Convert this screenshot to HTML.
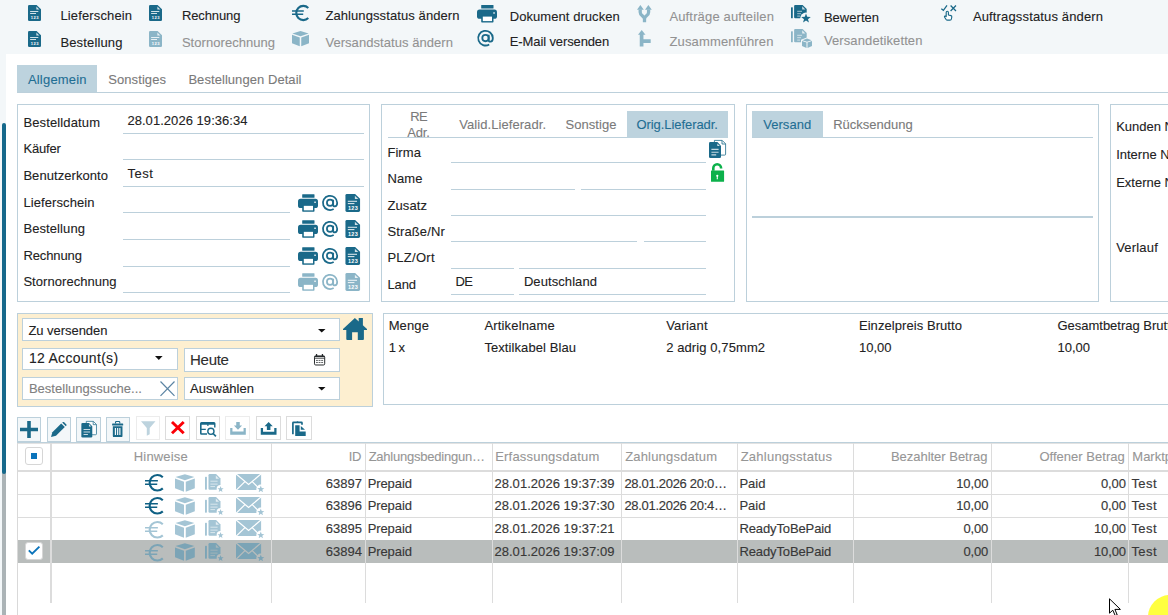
<!DOCTYPE html>
<html lang="de"><head><meta charset="utf-8"><title>Bestellungen</title>
<style>
html,body{margin:0;padding:0;}
body{width:1168px;height:615px;overflow:hidden;background:#fff;position:relative;font-family:"Liberation Sans",sans-serif;}
.t{position:absolute;white-space:nowrap;line-height:20px;height:20px;-webkit-text-stroke-width:0.1px;}
.b{position:absolute;box-sizing:border-box;}
svg{overflow:visible;}
</style></head><body>
<div class="b" style="left:0px;top:0px;width:1168px;height:54px;background:#f3f7f9;"></div>
<div class="b" style="left:0px;top:54px;width:6px;height:561px;background:#f3f7f9;"></div>
<div class="b" style="left:2.2px;top:470px;width:3.7px;height:145px;background:#abb3b6;"></div>
<div class="b" style="left:2px;top:123px;width:4px;height:351px;background:#15688b;border-radius:2px;"></div>
<svg class="b" style="left:28px;top:5px;" width="13" height="16" viewBox="0 0 13 16"><path d="M1.3 0H8.6L13 4.2V14.7Q13 16 11.7 16H1.3Q0 16 0 14.7V1.3Q0 0 1.3 0Z" fill="#1a6989"/><path d="M8.4 1.6V4.5H11.4Z" fill="#fff" opacity=".8"/><rect x="2.1" y="6" width="8.2" height="1" fill="#fff" opacity=".8"/><rect x="2.1" y="8" width="5.9" height="1" fill="#fff" opacity=".8"/><text x="2.7" y="13.8" font-family="Liberation Sans, sans-serif" font-weight="bold" font-size="4.1" fill="#fff" textLength="7.9" lengthAdjust="spacing">123</text></svg>
<span class="t" style="left:60.40px;top:6px;font-size:13px;color:#222;letter-spacing:0.138px;">Lieferschein</span>
<svg class="b" style="left:28px;top:31px;" width="13" height="16" viewBox="0 0 13 16"><path d="M1.3 0H8.6L13 4.2V14.7Q13 16 11.7 16H1.3Q0 16 0 14.7V1.3Q0 0 1.3 0Z" fill="#1a6989"/><path d="M8.4 1.6V4.5H11.4Z" fill="#fff" opacity=".8"/><rect x="2.1" y="6" width="8.2" height="1" fill="#fff" opacity=".8"/><rect x="2.1" y="8" width="5.9" height="1" fill="#fff" opacity=".8"/><text x="2.7" y="13.8" font-family="Liberation Sans, sans-serif" font-weight="bold" font-size="4.1" fill="#fff" textLength="7.9" lengthAdjust="spacing">123</text></svg>
<span class="t" style="left:60.40px;top:33px;font-size:13px;color:#222;letter-spacing:0.152px;">Bestellung</span>
<svg class="b" style="left:149px;top:5px;" width="13" height="16" viewBox="0 0 13 16"><path d="M1.3 0H8.6L13 4.2V14.7Q13 16 11.7 16H1.3Q0 16 0 14.7V1.3Q0 0 1.3 0Z" fill="#1a6989"/><path d="M8.4 1.6V4.5H11.4Z" fill="#fff" opacity=".8"/><rect x="2.1" y="6" width="8.2" height="1" fill="#fff" opacity=".8"/><rect x="2.1" y="8" width="5.9" height="1" fill="#fff" opacity=".8"/><text x="2.7" y="13.8" font-family="Liberation Sans, sans-serif" font-weight="bold" font-size="4.1" fill="#fff" textLength="7.9" lengthAdjust="spacing">123</text></svg>
<span class="t" style="left:181.90px;top:6px;font-size:13px;color:#222;letter-spacing:-0.102px;">Rechnung</span>
<svg class="b" style="left:149px;top:31px;" width="13" height="16" viewBox="0 0 13 16"><path d="M1.3 0H8.6L13 4.2V14.7Q13 16 11.7 16H1.3Q0 16 0 14.7V1.3Q0 0 1.3 0Z" fill="#8bb5c7"/><path d="M8.4 1.6V4.5H11.4Z" fill="#fff" opacity=".8"/><rect x="2.1" y="6" width="8.2" height="1" fill="#fff" opacity=".8"/><rect x="2.1" y="8" width="5.9" height="1" fill="#fff" opacity=".8"/><text x="2.7" y="13.8" font-family="Liberation Sans, sans-serif" font-weight="bold" font-size="4.1" fill="#fff" textLength="7.9" lengthAdjust="spacing">123</text></svg>
<span class="t" style="left:181.90px;top:33px;font-size:13px;color:#929292;letter-spacing:0.052px;">Stornorechnung</span>
<svg class="b" style="left:292px;top:5px;" width="17.4" height="16" viewBox="0 0 17.4 16"><path d="M16.3 2.9A7.1 7.1 0 1 0 16.3 13.1" fill="none" stroke="#1a6989" stroke-width="2.1"/><path d="M0 6.1H11.8M0 9.3H11.2" stroke="#1a6989" stroke-width="1.512" fill="none"/></svg>
<span class="t" style="left:325.40px;top:6px;font-size:13px;color:#222;letter-spacing:0.093px;">Zahlungsstatus ändern</span>
<svg class="b" style="left:292px;top:31px;" width="17" height="15.3" viewBox="0 0 18 16"><path d="M9 0L17.6 2.6L9 5.4L0.4 2.6Z" fill="#8bb5c7"/><path d="M0 4L8.2 6.8V16L0 12.8Z" fill="#8bb5c7"/><path d="M18 4L9.8 6.8V16L18 12.8Z" fill="#8bb5c7"/></svg>
<span class="t" style="left:325.40px;top:33px;font-size:13px;color:#929292;letter-spacing:0.055px;">Versandstatus ändern</span>
<svg class="b" style="left:477px;top:5.1px;" width="20" height="17.5" viewBox="0 0 20 17.5"><rect x="4.2" y="0" width="12.3" height="3.6" rx=".5" fill="#1a6989"/><rect x="0" y="4.6" width="20" height="9.2" rx="2.6" fill="#1a6989"/><rect x="4.2" y="10.7" width="12.3" height="6.8" rx=".7" fill="#1a6989"/><rect x="5.8" y="11.6" width="9.2" height="4.5" fill="#fff"/><rect x="16.3" y="7.2" width="1.5" height="1.5" rx=".4" fill="#fff"/></svg>
<span class="t" style="left:509.80px;top:7px;font-size:13px;color:#222;letter-spacing:0.055px;">Dokument drucken</span>
<svg class="b" style="left:477.2px;top:30px;" width="17" height="16.5" viewBox="0 0 16 16"><circle cx="8" cy="7.8" r="3.1" fill="none" stroke="#1a6989" stroke-width="1.75"/><path d="M11.1 4.6V9.6Q11.1 11.3 12.8 11.3Q15.1 11.3 15.1 7.8A7.1 7.1 0 1 0 11.6 14" fill="none" stroke="#1a6989" stroke-width="1.75"/></svg>
<span class="t" style="left:509.80px;top:32px;font-size:13px;color:#222;letter-spacing:-0.117px;">E-Mail versenden</span>
<svg class="b" style="left:637.2px;top:4.8px;" width="14.8" height="17.2" viewBox="0 0 14.8 17.2"><path d="M3.2 4.4V7.2C3.2 11 7.5 10.6 7.5 14V17.2M11.6 4.4V7.2C11.6 11 7.5 10.6 7.5 14" fill="none" stroke="#8bb5c7" stroke-width="3.3"/><path d="M0 4.7L3.4 0L6.8 4.7ZM8 4.7L11.4 0L14.8 4.7Z" fill="#8bb5c7"/></svg>
<span class="t" style="left:669.40px;top:7px;font-size:13px;color:#929292;letter-spacing:0.155px;">Aufträge aufteilen</span>
<svg class="b" style="left:637.5px;top:29.9px;" width="12.7" height="16.5" viewBox="0 0 12.7 16.5"><path d="M3.6 16.5V4M3.6 11.05H12.7" fill="none" stroke="#8bb5c7" stroke-width="3.7"/><path d="M0 4.8L3.7 0L7.5 4.8Z" fill="#8bb5c7"/></svg>
<span class="t" style="left:669.40px;top:32px;font-size:13px;color:#929292;letter-spacing:0.164px;">Zusammenführen</span>
<svg class="b" style="left:791px;top:5.1px;" width="20" height="18" viewBox="0 0 20 18"><rect x="0" y="2.3" width="1.8" height="11" rx=".5" fill="#1a6989"/><path d="M4.1 0H11.6L15.7 4.1V12.3Q15.7 13.3 14.7 13.3H4.1Q3.1 13.3 3.1 12.3V1Q3.1 0 4.1 0Z" fill="#1a6989"/><path d="M11.2 1.3V4.4H14.4Z" fill="#fff" opacity=".75"/><path d="M6.2 6.3H11M6.2 8.7H10M6.2 11.1H9" stroke="#fff" stroke-width="1" opacity=".6"/><circle cx="15" cy="13.3" r="5.7" fill="#f3f7f9"/><polygon points="15.00,8.50 16.23,11.80 19.76,11.95 17.00,14.15 17.94,17.55 15.00,15.60 12.06,17.55 13.00,14.15 10.24,11.95 13.77,11.80" fill="#1a6989"/></svg>
<span class="t" style="left:823.90px;top:8px;font-size:13px;color:#222;letter-spacing:0.037px;">Bewerten</span>
<svg class="b" style="left:791px;top:29.4px;" width="21.2" height="19" viewBox="0 0 21.2 19"><rect x="0" y="2.3" width="1.8" height="11" rx=".5" fill="#8bb5c7"/><path d="M4.1 0H11.6L15.7 4.1V12.3Q15.7 13.3 14.7 13.3H4.1Q3.1 13.3 3.1 12.3V1Q3.1 0 4.1 0Z" fill="#8bb5c7"/><path d="M11.2 1.3V4.4H14.4Z" fill="#fff" opacity=".75"/><path d="M6.2 6.3H11M6.2 8.7H10M6.2 11.1H9" stroke="#fff" stroke-width="1" opacity=".6"/><path d="M16 8.6L22 10.8V17.2L16 19.8L10 17.2V10.8Z" fill="#f3f7f9"/><path d="M16 9.6L20.6 11.2L16 12.8L11.4 11.2Z" fill="#8bb5c7"/><path d="M11 12L15.5 13.6V18.9L11 17Z" fill="#8bb5c7"/><path d="M21 12L16.5 13.6V18.9L21 17Z" fill="#8bb5c7"/></svg>
<span class="t" style="left:823.90px;top:31px;font-size:13px;color:#929292;letter-spacing:0.114px;">Versandetiketten</span>
<svg class="b" style="left:940.8px;top:5.1px;" width="15.4" height="15.6" viewBox="0 0 15.4 15.6"><path d="M0.3 3.8L2.4 5.3L6 0.4" fill="none" stroke="#1a6989" stroke-width="1.25"/><path d="M9.6 0.5L15 6M15 0.5L9.6 6" fill="none" stroke="#1a6989" stroke-width="1.25"/><path d="M5.2 11.6V7.4Q5.2 6.3 6.3 6.3Q7.4 6.3 7.4 7.4V10L10 10.6Q11 10.9 10.8 12L10.4 14Q10.2 15.1 9 15.1H6.4Q5.6 15.1 5 14.3L3.6 12.2Q3.2 11.4 4 11.1Q4.7 10.9 5.2 11.6Z" fill="#fff" stroke="#1a6989" stroke-width="1.15" stroke-linejoin="round"/></svg>
<span class="t" style="left:972.90px;top:7px;font-size:13px;color:#222;letter-spacing:0.147px;">Auftragsstatus ändern</span>
<div class="b" style="left:17px;top:65px;width:80px;height:27px;background:#bdd3de;"></div>
<div class="b" style="left:17px;top:92px;width:1151px;height:1px;background:#bcd0db;"></div>
<span class="t" style="left:27.90px;top:70px;font-size:13px;color:#1f6e93;letter-spacing:0.203px;">Allgemein</span>
<span class="t" style="left:108.20px;top:70px;font-size:13px;color:#7a7a7a;letter-spacing:0.090px;">Sonstiges</span>
<span class="t" style="left:188.40px;top:70px;font-size:13px;color:#7a7a7a;letter-spacing:0.060px;">Bestellungen Detail</span>
<div class="b" style="left:17px;top:104px;width:353px;height:198px;border:1px solid #bcd0db;"></div>
<div class="b" style="left:123px;top:133px;width:241px;height:1px;background:#bcd0db;"></div>
<div class="b" style="left:123px;top:159px;width:241px;height:1px;background:#bcd0db;"></div>
<div class="b" style="left:123px;top:186px;width:241px;height:1px;background:#bcd0db;"></div>
<div class="b" style="left:123px;top:212px;width:167px;height:1px;background:#bcd0db;"></div>
<div class="b" style="left:123px;top:239px;width:167px;height:1px;background:#bcd0db;"></div>
<div class="b" style="left:123px;top:266px;width:167px;height:1px;background:#bcd0db;"></div>
<div class="b" style="left:123px;top:292px;width:167px;height:1px;background:#bcd0db;"></div>
<span class="t" style="left:23.40px;top:113px;font-size:13px;color:#222;letter-spacing:0.131px;">Bestelldatum</span>
<span class="t" style="left:127.40px;top:111px;font-size:13px;color:#222;letter-spacing:0.048px;">28.01.2026 19:36:34</span>
<span class="t" style="left:23.40px;top:139px;font-size:13px;color:#222;letter-spacing:-0.158px;">Käufer</span>
<span class="t" style="left:23.40px;top:166px;font-size:13px;color:#222;letter-spacing:0.059px;">Benutzerkonto</span>
<span class="t" style="left:127.40px;top:164px;font-size:13px;color:#222;letter-spacing:0.544px;">Test</span>
<span class="t" style="left:23.40px;top:193px;font-size:13px;color:#222;letter-spacing:0.093px;">Lieferschein</span>
<span class="t" style="left:23.40px;top:219px;font-size:13px;color:#222;letter-spacing:0.096px;">Bestellung</span>
<span class="t" style="left:23.40px;top:246px;font-size:13px;color:#222;letter-spacing:-0.102px;">Rechnung</span>
<span class="t" style="left:23.40px;top:272px;font-size:13px;color:#222;letter-spacing:0.052px;">Stornorechnung</span>
<svg class="b" style="left:298.2px;top:193.9px;" width="20" height="18" viewBox="0 0 20 17.5"><rect x="4.2" y="0" width="12.3" height="3.6" rx=".5" fill="#1a6989"/><rect x="0" y="4.6" width="20" height="9.2" rx="2.6" fill="#1a6989"/><rect x="4.2" y="10.7" width="12.3" height="6.8" rx=".7" fill="#1a6989"/><rect x="5.8" y="11.6" width="9.2" height="4.5" fill="#fff"/><rect x="16.3" y="7.2" width="1.5" height="1.5" rx=".4" fill="#fff"/></svg>
<svg class="b" style="left:322px;top:194.8px;" width="16.1" height="16.1" viewBox="0 0 16 16"><circle cx="8" cy="7.8" r="3.1" fill="none" stroke="#1a6989" stroke-width="1.75"/><path d="M11.1 4.6V9.6Q11.1 11.3 12.8 11.3Q15.1 11.3 15.1 7.8A7.1 7.1 0 1 0 11.6 14" fill="none" stroke="#1a6989" stroke-width="1.75"/></svg>
<svg class="b" style="left:345.2px;top:194px;" width="15.5" height="18" viewBox="0 0 13 16"><path d="M1.3 0H8.6L13 4.2V14.7Q13 16 11.7 16H1.3Q0 16 0 14.7V1.3Q0 0 1.3 0Z" fill="#1a6989"/><path d="M8.4 1.6V4.5H11.4Z" fill="#fff" opacity=".8"/><rect x="2.1" y="6" width="8.2" height="1" fill="#fff" opacity=".8"/><rect x="2.1" y="8" width="5.9" height="1" fill="#fff" opacity=".8"/><text x="2.3" y="14.1" font-family="Liberation Sans, sans-serif" font-weight="bold" font-size="4.9" fill="#fff" textLength="8.6" lengthAdjust="spacing">123</text></svg>
<svg class="b" style="left:298.2px;top:219.9px;" width="20" height="18" viewBox="0 0 20 17.5"><rect x="4.2" y="0" width="12.3" height="3.6" rx=".5" fill="#1a6989"/><rect x="0" y="4.6" width="20" height="9.2" rx="2.6" fill="#1a6989"/><rect x="4.2" y="10.7" width="12.3" height="6.8" rx=".7" fill="#1a6989"/><rect x="5.8" y="11.6" width="9.2" height="4.5" fill="#fff"/><rect x="16.3" y="7.2" width="1.5" height="1.5" rx=".4" fill="#fff"/></svg>
<svg class="b" style="left:322px;top:220.8px;" width="16.1" height="16.1" viewBox="0 0 16 16"><circle cx="8" cy="7.8" r="3.1" fill="none" stroke="#1a6989" stroke-width="1.75"/><path d="M11.1 4.6V9.6Q11.1 11.3 12.8 11.3Q15.1 11.3 15.1 7.8A7.1 7.1 0 1 0 11.6 14" fill="none" stroke="#1a6989" stroke-width="1.75"/></svg>
<svg class="b" style="left:345.2px;top:220px;" width="15.5" height="18" viewBox="0 0 13 16"><path d="M1.3 0H8.6L13 4.2V14.7Q13 16 11.7 16H1.3Q0 16 0 14.7V1.3Q0 0 1.3 0Z" fill="#1a6989"/><path d="M8.4 1.6V4.5H11.4Z" fill="#fff" opacity=".8"/><rect x="2.1" y="6" width="8.2" height="1" fill="#fff" opacity=".8"/><rect x="2.1" y="8" width="5.9" height="1" fill="#fff" opacity=".8"/><text x="2.3" y="14.1" font-family="Liberation Sans, sans-serif" font-weight="bold" font-size="4.9" fill="#fff" textLength="8.6" lengthAdjust="spacing">123</text></svg>
<svg class="b" style="left:298.2px;top:246.9px;" width="20" height="18" viewBox="0 0 20 17.5"><rect x="4.2" y="0" width="12.3" height="3.6" rx=".5" fill="#1a6989"/><rect x="0" y="4.6" width="20" height="9.2" rx="2.6" fill="#1a6989"/><rect x="4.2" y="10.7" width="12.3" height="6.8" rx=".7" fill="#1a6989"/><rect x="5.8" y="11.6" width="9.2" height="4.5" fill="#fff"/><rect x="16.3" y="7.2" width="1.5" height="1.5" rx=".4" fill="#fff"/></svg>
<svg class="b" style="left:322px;top:247.8px;" width="16.1" height="16.1" viewBox="0 0 16 16"><circle cx="8" cy="7.8" r="3.1" fill="none" stroke="#1a6989" stroke-width="1.75"/><path d="M11.1 4.6V9.6Q11.1 11.3 12.8 11.3Q15.1 11.3 15.1 7.8A7.1 7.1 0 1 0 11.6 14" fill="none" stroke="#1a6989" stroke-width="1.75"/></svg>
<svg class="b" style="left:345.2px;top:247px;" width="15.5" height="18" viewBox="0 0 13 16"><path d="M1.3 0H8.6L13 4.2V14.7Q13 16 11.7 16H1.3Q0 16 0 14.7V1.3Q0 0 1.3 0Z" fill="#1a6989"/><path d="M8.4 1.6V4.5H11.4Z" fill="#fff" opacity=".8"/><rect x="2.1" y="6" width="8.2" height="1" fill="#fff" opacity=".8"/><rect x="2.1" y="8" width="5.9" height="1" fill="#fff" opacity=".8"/><text x="2.3" y="14.1" font-family="Liberation Sans, sans-serif" font-weight="bold" font-size="4.9" fill="#fff" textLength="8.6" lengthAdjust="spacing">123</text></svg>
<svg class="b" style="left:298.2px;top:272.9px;" width="20" height="18" viewBox="0 0 20 17.5"><rect x="4.2" y="0" width="12.3" height="3.6" rx=".5" fill="#8bb5c7"/><rect x="0" y="4.6" width="20" height="9.2" rx="2.6" fill="#8bb5c7"/><rect x="4.2" y="10.7" width="12.3" height="6.8" rx=".7" fill="#8bb5c7"/><rect x="5.8" y="11.6" width="9.2" height="4.5" fill="#fff"/><rect x="16.3" y="7.2" width="1.5" height="1.5" rx=".4" fill="#fff"/></svg>
<svg class="b" style="left:322px;top:273.8px;" width="16.1" height="16.1" viewBox="0 0 16 16"><circle cx="8" cy="7.8" r="3.1" fill="none" stroke="#8bb5c7" stroke-width="1.75"/><path d="M11.1 4.6V9.6Q11.1 11.3 12.8 11.3Q15.1 11.3 15.1 7.8A7.1 7.1 0 1 0 11.6 14" fill="none" stroke="#8bb5c7" stroke-width="1.75"/></svg>
<svg class="b" style="left:345.2px;top:273px;" width="15.5" height="18" viewBox="0 0 13 16"><path d="M1.3 0H8.6L13 4.2V14.7Q13 16 11.7 16H1.3Q0 16 0 14.7V1.3Q0 0 1.3 0Z" fill="#8bb5c7"/><path d="M8.4 1.6V4.5H11.4Z" fill="#fff" opacity=".8"/><rect x="2.1" y="6" width="8.2" height="1" fill="#fff" opacity=".8"/><rect x="2.1" y="8" width="5.9" height="1" fill="#fff" opacity=".8"/><text x="2.3" y="14.1" font-family="Liberation Sans, sans-serif" font-weight="bold" font-size="4.9" fill="#fff" textLength="8.6" lengthAdjust="spacing">123</text></svg>
<div class="b" style="left:381px;top:104px;width:354px;height:198px;border:1px solid #bcd0db;"></div>
<div class="b" style="left:388px;top:137px;width:340px;height:1px;background:#bcd0db;"></div>
<div class="b" style="left:627px;top:111px;width:101px;height:27px;background:#bdd3de;"></div>
<span class="t" style="left:410.14px;top:107px;font-size:13px;color:#7a7a7a;letter-spacing:-0.450px;">RE</span>
<span class="t" style="left:407.15px;top:123px;font-size:13px;color:#7a7a7a;letter-spacing:-0.102px;clip-path:inset(0 0 3.5px 0);">Adr.</span>
<span class="t" style="left:459.15px;top:115px;font-size:13px;color:#7a7a7a;letter-spacing:0.075px;">Valid.Lieferadr.</span>
<span class="t" style="left:565.40px;top:115px;font-size:13px;color:#7a7a7a;letter-spacing:0.075px;">Sonstige</span>
<span class="t" style="left:636.40px;top:115px;font-size:13px;color:#1f6e93;letter-spacing:-0.062px;">Orig.Lieferadr.</span>
<span class="t" style="left:387.40px;top:143px;font-size:13px;color:#222;letter-spacing:0.072px;">Firma</span>
<span class="t" style="left:387.40px;top:169px;font-size:13px;color:#222;letter-spacing:0.122px;">Name</span>
<span class="t" style="left:387.40px;top:196px;font-size:13px;color:#222;letter-spacing:0.120px;">Zusatz</span>
<span class="t" style="left:387.40px;top:222px;font-size:13px;color:#222;letter-spacing:0.136px;">Straße/Nr</span>
<span class="t" style="left:387.40px;top:248px;font-size:13px;color:#222;letter-spacing:0.267px;">PLZ/Ort</span>
<span class="t" style="left:387.40px;top:275px;font-size:13px;color:#222;letter-spacing:-0.081px;">Land</span>
<span class="t" style="left:455.39px;top:272px;font-size:13px;color:#222;letter-spacing:-0.450px;">DE</span>
<span class="t" style="left:523.90px;top:272px;font-size:13px;color:#222;letter-spacing:0.079px;">Deutschland</span>
<div class="b" style="left:451px;top:162px;width:255px;height:1px;background:#bcd0db;"></div>
<div class="b" style="left:451px;top:189px;width:124px;height:1px;background:#bcd0db;"></div>
<div class="b" style="left:581px;top:189px;width:125px;height:1px;background:#bcd0db;"></div>
<div class="b" style="left:451px;top:215px;width:255px;height:1px;background:#bcd0db;"></div>
<div class="b" style="left:451px;top:241px;width:186px;height:1px;background:#bcd0db;"></div>
<div class="b" style="left:644px;top:241px;width:62px;height:1px;background:#bcd0db;"></div>
<div class="b" style="left:451px;top:268px;width:63px;height:1px;background:#bcd0db;"></div>
<div class="b" style="left:519px;top:268px;width:187px;height:1px;background:#bcd0db;"></div>
<div class="b" style="left:451px;top:294px;width:63px;height:1px;background:#bcd0db;"></div>
<div class="b" style="left:519px;top:294px;width:187px;height:1px;background:#bcd0db;"></div>
<svg class="b" style="left:709px;top:140px;" width="17" height="18" viewBox="0 0 17 18"><path d="M5.4 0.4H13.2L16.6 3.8V14.2Q16.6 15.1 15.7 15.1H5.4Z" fill="#fff" stroke="#1a6989" stroke-width=".8"/><path d="M13 0.6V4H16.4" fill="none" stroke="#1a6989" stroke-width=".8"/><path d="M1.3 2.1H8.4L12 5.7V16.7Q12 18 10.7 18H1.3Q0 18 0 16.7V3.4Q0 2.1 1.3 2.1Z" fill="#1a6989"/><path d="M8.3 3.4V6H10.9Z" fill="#fff" opacity=".8"/><path d="M2.4 9.4H9.6M2.4 12.2H9.6M2.4 14.9H7.2" stroke="#fff" stroke-width="1.1" opacity=".75"/></svg>
<svg class="b" style="left:711px;top:163.2px;" width="13.2" height="18.7" viewBox="0 0 13.2 18.7"><path d="M2.3 7.8V5.2A3.9 3.9 0 0 1 10.1 5.2V5.5" fill="none" stroke="#0cb14b" stroke-width="2.6"/><rect x="0" y="7.4" width="13.1" height="11.3" rx=".5" fill="#0cb14b"/><circle cx="6.3" cy="12.8" r="1.1" fill="#fff"/><path d="M5.9 12.8H6.7L6.9 16.3H5.7Z" fill="#fff"/></svg>
<div class="b" style="left:746px;top:104px;width:353px;height:198px;border:1px solid #bcd0db;"></div>
<div class="b" style="left:752px;top:111px;width:71px;height:27px;background:#bdd3de;"></div>
<div class="b" style="left:752px;top:137px;width:341px;height:1px;background:#bcd0db;"></div>
<span class="t" style="left:763.15px;top:115px;font-size:13px;color:#1f6e93;letter-spacing:0.061px;">Versand</span>
<span class="t" style="left:833.15px;top:115px;font-size:13px;color:#7a7a7a;letter-spacing:0.018px;">Rücksendung</span>
<div class="b" style="left:752px;top:216px;width:341px;height:2px;background:#bcd0db;"></div>
<div class="b" style="left:1110px;top:104px;width:80px;height:198px;border:1px solid #bcd0db;"></div>
<span class="t" style="left:1116.15px;top:117px;font-size:13px;color:#222;letter-spacing:0.000px;">Kunden Nr</span>
<span class="t" style="left:1116.15px;top:145px;font-size:13px;color:#222;letter-spacing:0.000px;">Interne Nr</span>
<span class="t" style="left:1116.15px;top:173px;font-size:13px;color:#222;letter-spacing:0.000px;">Externe Nr</span>
<span class="t" style="left:1116.15px;top:238px;font-size:13px;color:#222;letter-spacing:0.196px;">Verlauf</span>
<div class="b" style="left:17px;top:313px;width:356px;height:94px;background:#fdefd0;border:1px solid #bcd0db;"></div>
<div class="b" style="left:22px;top:318px;width:318px;height:23px;background:#fff;border:1px solid #bcd0db;"></div>
<span class="t" style="left:28.40px;top:321px;font-size:13px;color:#222;letter-spacing:-0.038px;">Zu versenden</span>
<svg class="b" style="left:317.5px;top:328.5px;" width="7.5" height="3.6" viewBox="0 0 7.5 3.6"><path d="M0 0H7.5L3.75 3.6Z" fill="#111"/></svg>
<svg class="b" style="left:343px;top:318px;" width="24" height="22" viewBox="0 0 24 22"><path d="M11.9 0L0 11V11.9H3.3V21Q3.3 21.9 4.2 21.9H9.1V14.2H14.8V21.9H20Q20.9 21.9 20.9 21V11.9H24V11L19.9 7.2V0H15.7V3.4Z" fill="#1a6989"/></svg>
<div class="b" style="left:22px;top:348px;width:156px;height:22px;background:#fff;border:1px solid #bcd0db;"></div>
<span class="t" style="left:28.90px;top:348px;font-size:14px;color:#222;letter-spacing:0.297px;">12 Account(s)</span>
<svg class="b" style="left:155px;top:356px;" width="7.6" height="4" viewBox="0 0 7.6 4"><path d="M0 0H7.6L3.8 4Z" fill="#111"/></svg>
<div class="b" style="left:184px;top:348px;width:156px;height:24px;background:#fff;border:1px solid #bcd0db;"></div>
<span class="t" style="left:190.00px;top:350px;font-size:15px;color:#2e2e2e;letter-spacing:-0.270px;">Heute</span>
<svg class="b" style="left:314px;top:354.1px;" width="11.2" height="11.5" viewBox="0 0 11.2 11.5"><rect x="0.5" y="2" width="10.2" height="9" rx="1.2" fill="#fff" stroke="#262a2c" stroke-width="1"/><rect x="0.5" y="1.8" width="10.2" height="1.3" fill="#262a2c"/><rect x="1.9" y="0" width="1.3" height="2.2" fill="#262a2c"/><rect x="7.8" y="0" width="1.3" height="2.2" fill="#262a2c"/><rect x="0.5" y="3.8" width="10.2" height=".8" fill="#262a2c"/><path d="M2 6.45H3.9M4.6 6.45H6.5M7.2 6.45H9.1M2 8.5H3.9M4.6 8.5H6.5M7.2 8.5H9.1" stroke="#262a2c" stroke-width=".85" opacity=".85"/></svg>
<div class="b" style="left:22px;top:377px;width:156px;height:23px;background:#fff;border:1px solid #bcd0db;"></div>
<span class="t" style="left:28.90px;top:379px;font-size:13px;color:#808080;letter-spacing:0.020px;">Bestellungssuche...</span>
<svg class="b" style="left:159.8px;top:381px;" width="15" height="15.4" viewBox="0 0 15 15.4"><path d="M0.5 0.5L14.5 14.9M14.5 0.5L0.5 14.9" stroke="#5b84a3" stroke-width="1.2" fill="none"/></svg>
<div class="b" style="left:184px;top:377px;width:156px;height:23px;background:#fff;border:1px solid #bcd0db;"></div>
<span class="t" style="left:190.00px;top:379px;font-size:13px;color:#222;letter-spacing:0.053px;">Auswählen</span>
<svg class="b" style="left:317.5px;top:386.8px;" width="7.5" height="3.6" viewBox="0 0 7.5 3.6"><path d="M0 0H7.5L3.75 3.6Z" fill="#111"/></svg>
<div class="b" style="left:383px;top:313px;width:800px;height:92px;border:1px solid #bcd0db;"></div>
<span class="t" style="left:388.65px;top:316px;font-size:13px;color:#222;letter-spacing:0.134px;">Menge</span>
<span class="t" style="left:484.40px;top:316px;font-size:13px;color:#222;letter-spacing:0.169px;">Artikelname</span>
<span class="t" style="left:666.15px;top:316px;font-size:13px;color:#222;letter-spacing:0.189px;">Variant</span>
<span class="t" style="left:858.90px;top:316px;font-size:13px;color:#222;letter-spacing:0.067px;">Einzelpreis Brutto</span>
<span class="t" style="left:1057.40px;top:316px;font-size:13px;color:#222;letter-spacing:-0.003px;">Gesamtbetrag Brutto</span>
<span class="t" style="left:388.64px;top:338px;font-size:13px;color:#222;letter-spacing:-0.450px;">1 x</span>
<span class="t" style="left:484.40px;top:338px;font-size:13px;color:#222;letter-spacing:0.081px;">Textilkabel Blau</span>
<span class="t" style="left:666.15px;top:338px;font-size:13px;color:#222;letter-spacing:0.096px;">2 adrig 0,75mm2</span>
<span class="t" style="left:858.90px;top:338px;font-size:13px;color:#222;letter-spacing:0.025px;">10,00</span>
<span class="t" style="left:1057.40px;top:338px;font-size:13px;color:#222;letter-spacing:0.025px;">10,00</span>
<div class="b" style="left:17px;top:417px;width:24px;height:25px;background:#f3f7f9;border:1px solid #bcd0db;"></div>
<div class="b" style="left:47px;top:417px;width:24px;height:25px;background:#f3f7f9;border:1px solid #bcd0db;"></div>
<div class="b" style="left:76px;top:417px;width:25px;height:25px;background:#f3f7f9;border:1px solid #bcd0db;"></div>
<div class="b" style="left:106px;top:417px;width:24px;height:25px;background:#f3f7f9;border:1px solid #bcd0db;"></div>
<div class="b" style="left:136px;top:416px;width:24px;height:24px;background:#fff;border:1px solid #ececec;"></div>
<div class="b" style="left:165px;top:416px;width:25px;height:24px;background:#fff;border:1px solid #dcdcdc;"></div>
<div class="b" style="left:196px;top:416px;width:24px;height:24px;background:#fff;border:1px solid #dcdcdc;"></div>
<div class="b" style="left:225px;top:416px;width:25px;height:24px;background:#fff;border:1px solid #ececec;"></div>
<div class="b" style="left:256px;top:416px;width:25px;height:24px;background:#fff;border:1px solid #dcdcdc;"></div>
<div class="b" style="left:286px;top:416px;width:26px;height:24px;background:#fff;border:1px solid #dcdcdc;"></div>
<svg class="b" style="left:20px;top:421px;" width="18" height="17" viewBox="0 0 18 17"><path d="M9 0V17M0 8.5H18" stroke="#1a6989" stroke-width="3.6" fill="none"/></svg>
<svg class="b" style="left:51px;top:422px;" width="16" height="15" viewBox="0 0 16 15"><path d="M0 15L1.4 10.2L10.2 1.4L13.8 5L5 13.8Z" fill="#1a6989"/><path d="M11.2 0.6L12 0Q12.6 -.3 13.2 .2L15.4 2.4Q15.8 3 15.4 3.6L14.8 4.2Z" fill="#1a6989"/></svg>
<svg class="b" style="left:80.7px;top:420.8px;" width="16.2" height="16.4" viewBox="0 0 17 18"><path d="M5.4 0.4H13.2L16.6 3.8V14.2Q16.6 15.1 15.7 15.1H5.4Z" fill="#fbfcfd" stroke="#1a6989" stroke-width=".8"/><path d="M13 0.6V4H16.4" fill="none" stroke="#1a6989" stroke-width=".8"/><path d="M1.3 2.1H8.4L12 5.7V16.7Q12 18 10.7 18H1.3Q0 18 0 16.7V3.4Q0 2.1 1.3 2.1Z" fill="#1a6989"/><path d="M8.3 3.4V6H10.9Z" fill="#fff" opacity=".8"/><path d="M2.4 9.4H9.6M2.4 12.2H9.6M2.4 14.9H7.2" stroke="#fff" stroke-width="1.1" opacity=".75"/></svg>
<svg class="b" style="left:112px;top:420.9px;" width="11.3" height="16.1" viewBox="0 0 11 16"><path d="M3.4 2.4V1.2Q3.4 .5 4.1 .5H6.9Q7.6 .5 7.6 1.2V2.4" fill="none" stroke="#1a6989" stroke-width="1.1"/><rect x="0" y="2.4" width="11" height="2" rx=".5" fill="#1a6989"/><path d="M0.7 5.2H10.3V14.8Q10.3 16 9.1 16H1.9Q.7 16 .7 14.8Z M2.7 7V14H3.9V7Z M4.9 7V14H6.1V7Z M7.1 7V14H8.3V7Z" fill="#1a6989" fill-rule="evenodd"/></svg>
<svg class="b" style="left:140.8px;top:421px;" width="14.5" height="15" viewBox="0 0 15 15"><path d="M0 0H15L9 7V13.4L6 15V7Z" fill="#bdd3de"/></svg>
<svg class="b" style="left:171px;top:421.4px;" width="13.7" height="13.3" viewBox="0 0 14 13.5"><path d="M1 1L13 12.5M13 1L1 12.5" stroke="#fb0007" stroke-width="3" fill="none"/></svg>
<svg class="b" style="left:200.2px;top:422px;" width="16.2" height="14.6" viewBox="0 0 16.2 14.6"><path d="M1.5 0H14Q15.5 0 15.5 1.5V5.4H14.1V2.7H8.5V4H7.3V2.7H1.6V6.8H5.8V8H1.6V11.3H7V12.7H1.5Q0 12.7 0 11.2V1.5Q0 0 1.5 0Z" fill="#1a6989"/><circle cx="10.9" cy="9.3" r="3.1" fill="none" stroke="#1a6989" stroke-width="1.4"/><path d="M13.1 11.5L15.9 14.3" stroke="#1a6989" stroke-width="1.7"/></svg>
<svg class="b" style="left:230px;top:422px;" width="16" height="12.7" viewBox="0 0 16 13"><path d="M0 6.2H2.3V9.8H13.7V6.2H16V13H0Z" fill="#8bb5c7"/><path d="M6.2 0H9.8V3.6H12.2L8 8L3.8 3.6H6.2Z" fill="#8bb5c7"/></svg>
<svg class="b" style="left:259.9px;top:422px;" width="17.3" height="12.8" viewBox="0 0 16 13"><path d="M0 6.2H2.3V9.8H13.7V6.2H16V13H0Z" fill="#1a6989"/><path d="M8 0L12.2 4.4H9.8V8H6.2V4.4H3.8Z" fill="#1a6989"/></svg>
<svg class="b" style="left:292px;top:420.8px;" width="14" height="15" viewBox="0 0 14 15"><path d="M0.9 13.2V2Q0.9 1.4 1.5 1.4H9.4Q10 1.4 10 2V3.8" fill="none" stroke="#1a6989" stroke-width="1.7"/><path d="M4.3 .8L5.5 0L6.7 .8Z" fill="#1a6989"/><path d="M3.2 4.2H7.6V10.5H13.7V14.9H3.2Z" fill="#1a6989"/><path d="M8.8 4.9V8.8H13Z" fill="#1a6989"/></svg>
<div class="b" style="left:17px;top:442px;width:1151px;height:1px;background:#bcd0db;"></div>
<div class="b" style="left:18px;top:443px;width:1150px;height:1px;background:#e2e2e2;"></div>
<div class="b" style="left:17px;top:443px;width:1px;height:172px;background:#d9d9d9;"></div>
<div class="b" style="left:18px;top:540px;width:1150px;height:23px;background:#b9bdbc;"></div>
<div class="b" style="left:18px;top:470px;width:1150px;height:2px;background:#dcdcdc;"></div>
<div class="b" style="left:18px;top:494px;width:1150px;height:1px;background:#dcdcdc;"></div>
<div class="b" style="left:18px;top:517px;width:1150px;height:1px;background:#dcdcdc;"></div>
<div class="b" style="left:50px;top:443px;width:2px;height:160px;background:#dcdcdc;"></div>
<div class="b" style="left:271px;top:443px;width:1px;height:160px;background:#dcdcdc;"></div>
<div class="b" style="left:365px;top:443px;width:1px;height:160px;background:#dcdcdc;"></div>
<div class="b" style="left:492px;top:443px;width:1px;height:160px;background:#dcdcdc;"></div>
<div class="b" style="left:621px;top:443px;width:1px;height:160px;background:#dcdcdc;"></div>
<div class="b" style="left:737px;top:443px;width:1px;height:160px;background:#dcdcdc;"></div>
<div class="b" style="left:853px;top:443px;width:1px;height:160px;background:#dcdcdc;"></div>
<div class="b" style="left:991px;top:443px;width:1px;height:160px;background:#dcdcdc;"></div>
<div class="b" style="left:1128px;top:443px;width:1px;height:160px;background:#dcdcdc;"></div>
<span class="t" style="left:133.80px;top:447px;font-size:13px;color:#969696;letter-spacing:0.170px;">Hinweise</span>
<span class="t" style="left:348.80px;top:447px;font-size:13px;color:#969696;letter-spacing:-0.450px;">ID</span>
<span class="t" style="left:368.65px;top:447px;font-size:13px;color:#969696;letter-spacing:-0.231px;">Zahlungsbedingun…</span>
<span class="t" style="left:495.15px;top:447px;font-size:13px;color:#969696;letter-spacing:0.210px;">Erfassungsdatum</span>
<span class="t" style="left:625.15px;top:447px;font-size:13px;color:#969696;letter-spacing:0.189px;">Zahlungsdatum</span>
<span class="t" style="left:740.65px;top:447px;font-size:13px;color:#969696;letter-spacing:0.246px;">Zahlungsstatus</span>
<span class="t" style="left:890.90px;top:447px;font-size:13px;color:#969696;letter-spacing:-0.019px;">Bezahlter Betrag</span>
<span class="t" style="left:1039.40px;top:447px;font-size:13px;color:#969696;letter-spacing:0.022px;">Offener Betrag</span>
<span class="t" style="left:1132.30px;top:447px;font-size:13px;color:#969696;letter-spacing:0.000px;">Marktplatz</span>
<div class="b" style="left:25.2px;top:447.2px;width:17.5px;height:17.5px;background:#fff;border:1px solid #d6d6d6;border-radius:3px;"></div>
<div class="b" style="left:31px;top:453px;width:6px;height:6px;background:#0b74bb;"></div>
<div class="b" style="left:25.2px;top:542.2px;width:17.5px;height:17.5px;background:#fff;border:1px solid #d6d6d6;border-radius:3px;"></div>
<svg class="b" style="left:28px;top:545px;" width="12" height="12" viewBox="0 0 12 12"><path d="M0.8 5.4L4.2 8.6L11.4 1.6" fill="none" stroke="#0b74bb" stroke-width="1.9"/></svg>
<span class="t" style="left:325.65px;top:474px;font-size:13px;color:#383838;letter-spacing:0.048px;-webkit-text-stroke:0.15px #383838;">63897</span>
<span class="t" style="left:367.65px;top:474px;font-size:13px;color:#383838;letter-spacing:-0.090px;-webkit-text-stroke:0.15px #383838;">Prepaid</span>
<span class="t" style="left:494.40px;top:474px;font-size:13px;color:#383838;letter-spacing:0.048px;-webkit-text-stroke:0.15px #383838;">28.01.2026 19:37:39</span>
<span class="t" style="left:624.40px;top:474px;font-size:13px;color:#383838;letter-spacing:-0.296px;-webkit-text-stroke:0.15px #383838;">28.01.2026 20:0…</span>
<span class="t" style="left:739.40px;top:474px;font-size:13px;color:#383838;letter-spacing:0.033px;-webkit-text-stroke:0.15px #383838;">Paid</span>
<span class="t" style="left:956.20px;top:474px;font-size:13px;color:#383838;letter-spacing:-0.075px;-webkit-text-stroke:0.15px #383838;">10,00</span>
<span class="t" style="left:1101.00px;top:474px;font-size:13px;color:#383838;letter-spacing:-0.130px;-webkit-text-stroke:0.15px #383838;">0,00</span>
<span class="t" style="left:1131.40px;top:474px;font-size:13px;color:#383838;letter-spacing:0.444px;-webkit-text-stroke:0.15px #383838;">Test</span>
<svg class="b" style="left:145px;top:474.4px;" width="19" height="17.6" viewBox="0 0 17.4 16"><path d="M16.3 2.9A7.1 7.1 0 1 0 16.3 13.1" fill="none" stroke="#0f6084" stroke-width="1.95"/><path d="M0 6.1H11.8M0 9.3H11.2" stroke="#0f6084" stroke-width="1.404" fill="none"/></svg>
<svg class="b" style="left:174.7px;top:473.9px;" width="19.8" height="18" viewBox="0 0 18 16"><path d="M9 0L17.6 2.6L9 5.4L0.4 2.6Z" fill="#a4c5d5"/><path d="M0 4L8.2 6.8V16L0 12.8Z" fill="#a4c5d5"/><path d="M18 4L9.8 6.8V16L18 12.8Z" fill="#a4c5d5"/></svg>
<svg class="b" style="left:205.4px;top:474.09999999999997px;" width="18.8" height="18" viewBox="0 0 18.8 18"><rect x="0" y="2.8" width="1.9" height="12.9" rx=".6" fill="#a4c5d5"/><path d="M4.7 0H11.1L15.5 4.4V14.5Q15.5 15.7 14.3 15.7H4.7Q3.5 15.7 3.5 14.5V1.2Q3.5 0 4.7 0Z" fill="#a4c5d5"/><path d="M10.8 1.4V4.7H14.1Z" fill="#fff" opacity=".7"/><path d="M5.4 7.2H12.6M5.4 10.1H12.6M5.4 12.6H10" stroke="#fff" stroke-width="1" opacity=".6"/><circle cx="15.6" cy="15.1" r="4" fill="#fff"/><polygon points="15.60,12.10 16.39,14.21 18.64,14.31 16.88,15.72 17.48,17.89 15.60,16.64 13.72,17.89 14.32,15.72 12.56,14.31 14.81,14.21" fill="#a4c5d5"/></svg>
<svg class="b" style="left:236px;top:474.09999999999997px;overflow:hidden;" width="28.5" height="18" viewBox="0 0 28.5 18"><rect x="0" y="0" width="25.1" height="16" fill="#a4c5d5"/><path d="M-.4 -.4L12.6 10.4L25.5 -.4M0 16.4L9.2 7.4M25.1 16.4L16 7.4" fill="none" stroke="#fff" stroke-width="1.25"/><circle cx="24.8" cy="15.1" r="4.5" fill="#fff"/><polygon points="24.80,11.60 25.71,14.04 28.32,14.16 26.28,15.78 26.97,18.29 24.80,16.85 22.63,18.29 23.32,15.78 21.28,14.16 23.89,14.04" fill="#a4c5d5"/></svg>
<span class="t" style="left:325.65px;top:496px;font-size:13px;color:#383838;letter-spacing:0.048px;-webkit-text-stroke:0.15px #383838;">63896</span>
<span class="t" style="left:367.65px;top:496px;font-size:13px;color:#383838;letter-spacing:-0.090px;-webkit-text-stroke:0.15px #383838;">Prepaid</span>
<span class="t" style="left:494.40px;top:496px;font-size:13px;color:#383838;letter-spacing:0.048px;-webkit-text-stroke:0.15px #383838;">28.01.2026 19:37:30</span>
<span class="t" style="left:624.40px;top:496px;font-size:13px;color:#383838;letter-spacing:-0.296px;-webkit-text-stroke:0.15px #383838;">28.01.2026 20:4…</span>
<span class="t" style="left:739.40px;top:496px;font-size:13px;color:#383838;letter-spacing:0.033px;-webkit-text-stroke:0.15px #383838;">Paid</span>
<span class="t" style="left:956.20px;top:496px;font-size:13px;color:#383838;letter-spacing:-0.075px;-webkit-text-stroke:0.15px #383838;">10,00</span>
<span class="t" style="left:1101.00px;top:496px;font-size:13px;color:#383838;letter-spacing:-0.130px;-webkit-text-stroke:0.15px #383838;">0,00</span>
<span class="t" style="left:1131.40px;top:496px;font-size:13px;color:#383838;letter-spacing:0.444px;-webkit-text-stroke:0.15px #383838;">Test</span>
<svg class="b" style="left:145px;top:497.4px;" width="19" height="17.6" viewBox="0 0 17.4 16"><path d="M16.3 2.9A7.1 7.1 0 1 0 16.3 13.1" fill="none" stroke="#0f6084" stroke-width="1.95"/><path d="M0 6.1H11.8M0 9.3H11.2" stroke="#0f6084" stroke-width="1.404" fill="none"/></svg>
<svg class="b" style="left:174.7px;top:496.9px;" width="19.8" height="18" viewBox="0 0 18 16"><path d="M9 0L17.6 2.6L9 5.4L0.4 2.6Z" fill="#a4c5d5"/><path d="M0 4L8.2 6.8V16L0 12.8Z" fill="#a4c5d5"/><path d="M18 4L9.8 6.8V16L18 12.8Z" fill="#a4c5d5"/></svg>
<svg class="b" style="left:205.4px;top:497.09999999999997px;" width="18.8" height="18" viewBox="0 0 18.8 18"><rect x="0" y="2.8" width="1.9" height="12.9" rx=".6" fill="#a4c5d5"/><path d="M4.7 0H11.1L15.5 4.4V14.5Q15.5 15.7 14.3 15.7H4.7Q3.5 15.7 3.5 14.5V1.2Q3.5 0 4.7 0Z" fill="#a4c5d5"/><path d="M10.8 1.4V4.7H14.1Z" fill="#fff" opacity=".7"/><path d="M5.4 7.2H12.6M5.4 10.1H12.6M5.4 12.6H10" stroke="#fff" stroke-width="1" opacity=".6"/><circle cx="15.6" cy="15.1" r="4" fill="#fff"/><polygon points="15.60,12.10 16.39,14.21 18.64,14.31 16.88,15.72 17.48,17.89 15.60,16.64 13.72,17.89 14.32,15.72 12.56,14.31 14.81,14.21" fill="#a4c5d5"/></svg>
<svg class="b" style="left:236px;top:497.09999999999997px;overflow:hidden;" width="28.5" height="18" viewBox="0 0 28.5 18"><rect x="0" y="0" width="25.1" height="16" fill="#a4c5d5"/><path d="M-.4 -.4L12.6 10.4L25.5 -.4M0 16.4L9.2 7.4M25.1 16.4L16 7.4" fill="none" stroke="#fff" stroke-width="1.25"/><circle cx="24.8" cy="15.1" r="4.5" fill="#fff"/><polygon points="24.80,11.60 25.71,14.04 28.32,14.16 26.28,15.78 26.97,18.29 24.80,16.85 22.63,18.29 23.32,15.78 21.28,14.16 23.89,14.04" fill="#a4c5d5"/></svg>
<span class="t" style="left:325.65px;top:519px;font-size:13px;color:#383838;letter-spacing:0.048px;-webkit-text-stroke:0.15px #383838;">63895</span>
<span class="t" style="left:367.65px;top:519px;font-size:13px;color:#383838;letter-spacing:-0.090px;-webkit-text-stroke:0.15px #383838;">Prepaid</span>
<span class="t" style="left:494.40px;top:519px;font-size:13px;color:#383838;letter-spacing:0.048px;-webkit-text-stroke:0.15px #383838;">28.01.2026 19:37:21</span>
<span class="t" style="left:739.40px;top:519px;font-size:13px;color:#383838;letter-spacing:-0.111px;-webkit-text-stroke:0.15px #383838;">ReadyToBePaid</span>
<span class="t" style="left:963.40px;top:519px;font-size:13px;color:#383838;letter-spacing:-0.130px;-webkit-text-stroke:0.15px #383838;">0,00</span>
<span class="t" style="left:1093.90px;top:519px;font-size:13px;color:#383838;letter-spacing:-0.100px;-webkit-text-stroke:0.15px #383838;">10,00</span>
<span class="t" style="left:1131.40px;top:519px;font-size:13px;color:#383838;letter-spacing:0.444px;-webkit-text-stroke:0.15px #383838;">Test</span>
<svg class="b" style="left:145px;top:520.5px;" width="19" height="17.6" viewBox="0 0 17.4 16"><path d="M16.3 2.9A7.1 7.1 0 1 0 16.3 13.1" fill="none" stroke="#a4c5d5" stroke-width="1.95"/><path d="M0 6.1H11.8M0 9.3H11.2" stroke="#a4c5d5" stroke-width="1.404" fill="none"/></svg>
<svg class="b" style="left:174.7px;top:520.0px;" width="19.8" height="18" viewBox="0 0 18 16"><path d="M9 0L17.6 2.6L9 5.4L0.4 2.6Z" fill="#a4c5d5"/><path d="M0 4L8.2 6.8V16L0 12.8Z" fill="#a4c5d5"/><path d="M18 4L9.8 6.8V16L18 12.8Z" fill="#a4c5d5"/></svg>
<svg class="b" style="left:205.4px;top:520.2px;" width="18.8" height="18" viewBox="0 0 18.8 18"><rect x="0" y="2.8" width="1.9" height="12.9" rx=".6" fill="#a4c5d5"/><path d="M4.7 0H11.1L15.5 4.4V14.5Q15.5 15.7 14.3 15.7H4.7Q3.5 15.7 3.5 14.5V1.2Q3.5 0 4.7 0Z" fill="#a4c5d5"/><path d="M10.8 1.4V4.7H14.1Z" fill="#fff" opacity=".7"/><path d="M5.4 7.2H12.6M5.4 10.1H12.6M5.4 12.6H10" stroke="#fff" stroke-width="1" opacity=".6"/><circle cx="15.6" cy="15.1" r="4" fill="#fff"/><polygon points="15.60,12.10 16.39,14.21 18.64,14.31 16.88,15.72 17.48,17.89 15.60,16.64 13.72,17.89 14.32,15.72 12.56,14.31 14.81,14.21" fill="#a4c5d5"/></svg>
<svg class="b" style="left:236px;top:520.2px;overflow:hidden;" width="28.5" height="18" viewBox="0 0 28.5 18"><rect x="0" y="0" width="25.1" height="16" fill="#a4c5d5"/><path d="M-.4 -.4L12.6 10.4L25.5 -.4M0 16.4L9.2 7.4M25.1 16.4L16 7.4" fill="none" stroke="#fff" stroke-width="1.25"/><circle cx="24.8" cy="15.1" r="4.5" fill="#fff"/><polygon points="24.80,11.60 25.71,14.04 28.32,14.16 26.28,15.78 26.97,18.29 24.80,16.85 22.63,18.29 23.32,15.78 21.28,14.16 23.89,14.04" fill="#a4c5d5"/></svg>
<span class="t" style="left:325.65px;top:542px;font-size:13px;color:#383838;letter-spacing:0.048px;-webkit-text-stroke:0.15px #383838;">63894</span>
<span class="t" style="left:367.65px;top:542px;font-size:13px;color:#383838;letter-spacing:-0.090px;-webkit-text-stroke:0.15px #383838;">Prepaid</span>
<span class="t" style="left:494.40px;top:542px;font-size:13px;color:#383838;letter-spacing:0.048px;-webkit-text-stroke:0.15px #383838;">28.01.2026 19:37:09</span>
<span class="t" style="left:739.40px;top:542px;font-size:13px;color:#383838;letter-spacing:-0.111px;-webkit-text-stroke:0.15px #383838;">ReadyToBePaid</span>
<span class="t" style="left:963.40px;top:542px;font-size:13px;color:#383838;letter-spacing:-0.130px;-webkit-text-stroke:0.15px #383838;">0,00</span>
<span class="t" style="left:1093.90px;top:542px;font-size:13px;color:#383838;letter-spacing:-0.100px;-webkit-text-stroke:0.15px #383838;">10,00</span>
<span class="t" style="left:1131.40px;top:542px;font-size:13px;color:#383838;letter-spacing:0.444px;-webkit-text-stroke:0.15px #383838;">Test</span>
<svg class="b" style="left:145px;top:543.5px;" width="19" height="17.6" viewBox="0 0 17.4 16"><path d="M16.3 2.9A7.1 7.1 0 1 0 16.3 13.1" fill="none" stroke="#7ba4b6" stroke-width="1.95"/><path d="M0 6.1H11.8M0 9.3H11.2" stroke="#7ba4b6" stroke-width="1.404" fill="none"/></svg>
<svg class="b" style="left:174.7px;top:543.0px;" width="19.8" height="18" viewBox="0 0 18 16"><path d="M9 0L17.6 2.6L9 5.4L0.4 2.6Z" fill="#7ba4b6"/><path d="M0 4L8.2 6.8V16L0 12.8Z" fill="#7ba4b6"/><path d="M18 4L9.8 6.8V16L18 12.8Z" fill="#7ba4b6"/></svg>
<svg class="b" style="left:205.4px;top:543.2px;" width="18.8" height="18" viewBox="0 0 18.8 18"><rect x="0" y="2.8" width="1.9" height="12.9" rx=".6" fill="#7ba4b6"/><path d="M4.7 0H11.1L15.5 4.4V14.5Q15.5 15.7 14.3 15.7H4.7Q3.5 15.7 3.5 14.5V1.2Q3.5 0 4.7 0Z" fill="#7ba4b6"/><path d="M10.8 1.4V4.7H14.1Z" fill="#b9bdbc" opacity=".7"/><path d="M5.4 7.2H12.6M5.4 10.1H12.6M5.4 12.6H10" stroke="#b9bdbc" stroke-width="1" opacity=".6"/><circle cx="15.6" cy="15.1" r="4" fill="#b9bdbc"/><polygon points="15.60,12.10 16.39,14.21 18.64,14.31 16.88,15.72 17.48,17.89 15.60,16.64 13.72,17.89 14.32,15.72 12.56,14.31 14.81,14.21" fill="#7ba4b6"/></svg>
<svg class="b" style="left:236px;top:543.2px;overflow:hidden;" width="28.5" height="18" viewBox="0 0 28.5 18"><rect x="0" y="0" width="25.1" height="16" fill="#7ba4b6"/><path d="M-.4 -.4L12.6 10.4L25.5 -.4M0 16.4L9.2 7.4M25.1 16.4L16 7.4" fill="none" stroke="#b9bdbc" stroke-width="1.25"/><circle cx="24.8" cy="15.1" r="4.5" fill="#b9bdbc"/><polygon points="24.80,11.60 25.71,14.04 28.32,14.16 26.28,15.78 26.97,18.29 24.80,16.85 22.63,18.29 23.32,15.78 21.28,14.16 23.89,14.04" fill="#7ba4b6"/></svg>
<div class="b" style="left:1148px;top:594.5px;width:44px;height:44px;background:#ffff40;border-radius:50%;"></div>
<svg class="b" style="left:1109px;top:598px;" width="12" height="19" viewBox="0 0 12 19"><path d="M0.5 0.8V15.2L3.8 12.2L6.2 17.6L8.2 16.8L5.9 11.4H11.4Z" fill="#fff" stroke="#000" stroke-width="1"/></svg>
</body></html>
